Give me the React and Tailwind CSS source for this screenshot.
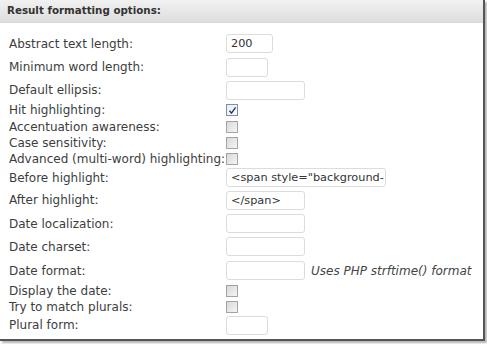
import React from 'react';

const font = { fontFamily: '"DejaVu Sans", Verdana, sans-serif' };

// one entry per form row: kind, label, field width / value, row height
const rows = [
  { label: 'Abstract text length:', type: 'text', w: 'w-[47px]', value: '200', h: 'h-[23px]' },
  { label: 'Minimum word length:', type: 'text', w: 'w-[42px]', h: 'h-[24px]' },
  { label: 'Default ellipsis:', type: 'text', w: 'w-[79px]', h: 'h-[22px]' },
  { label: 'Hit highlighting:', type: 'check', checked: true, h: 'h-[18px]' },
  { label: 'Accentuation awareness:', type: 'check', h: 'h-[16px]' },
  { label: 'Case sensitivity:', type: 'check', h: 'h-[16px]' },
  { label: 'Advanced (multi-word) highlighting:', type: 'check', h: 'h-[16px]' },
  { label: 'Before highlight:', type: 'text', w: 'w-[160px]', value: '<span style="background-', h: 'h-[21px]' },
  { label: 'After highlight:', type: 'text', w: 'w-[79px]', value: '</span>', h: 'h-[24px]' },
  { label: 'Date localization:', type: 'text', w: 'w-[79px]', h: 'h-[23px]' },
  { label: 'Date charset:', type: 'text', w: 'w-[79px]', h: 'h-[23px]' },
  { label: 'Date format:', type: 'text', w: 'w-[79px]', h: 'h-[25px]', note: 'Uses PHP strftime() format' },
  { label: 'Display the date:', type: 'check', h: 'h-[16px]' },
  { label: 'Try to match plurals:', type: 'check', h: 'h-[15px]' },
  { label: 'Plural form:', type: 'text', w: 'w-[42px]', h: 'h-[22px]' },
];

const CheckBox = ({ checked }) => (
  <span
    className={`flex h-[12px] w-[12px] shrink-0 items-center justify-center border ${
      checked
        ? 'border-[#7d8ea8] bg-gradient-to-br from-[#e9edf3] to-[#fbfcfd]'
        : 'border-[#a3a3a3] bg-gradient-to-br from-[#d9d9d9] to-[#f5f5f5]'
    }`}
  >
    {checked && (
      <svg width="9" height="9" viewBox="0 0 9 9">
        <path d="M1.5 4.8 L3.5 7.2 L7.6 1.4" fill="none" stroke="#1f3a6b" strokeWidth="1.4" />
      </svg>
    )}
  </span>
);

const TextBox = ({ w, value }) => (
  <div
    className={`${w} h-[19px] shrink-0 overflow-hidden whitespace-nowrap rounded-[3px] border border-[#dcdcdc] bg-white pl-[4px] text-[11.3px] leading-[17px] text-[#333]`}
  >
    {value}
  </div>
);

export default function App() {
  return (
    <div className="h-[344px] w-[487px] overflow-hidden bg-white" style={font}>
      <div className="h-[341px] w-[485px] border-r-2 border-b-2 border-[#555] bg-white shadow-[2px_2px_2px_rgba(0,0,0,0.3)]">
        <div className="flex h-[23px] items-center border-b border-[#d9d9d9] bg-gradient-to-b from-[#f1f1f1] to-[#dedede] pl-[7px] text-[10.3px] font-bold text-[#333]">
          Result formatting options:
        </div>
        <div className="pt-[9px]">
          {rows.map((r) => (
            <div key={r.label} className={`flex ${r.h} items-center`}>
              <div className="w-[226px] shrink-0 whitespace-nowrap pl-[9px] text-[12px] text-[#3d3d3d]">
                {r.label}
              </div>
              {r.type === 'check' ? <CheckBox checked={r.checked} /> : <TextBox w={r.w} value={r.value} />}
              {r.note && <span className="ml-[6px] whitespace-nowrap text-[12px] italic text-[#444]">{r.note}</span>}
            </div>
          ))}
        </div>
      </div>
    </div>
  );
}
